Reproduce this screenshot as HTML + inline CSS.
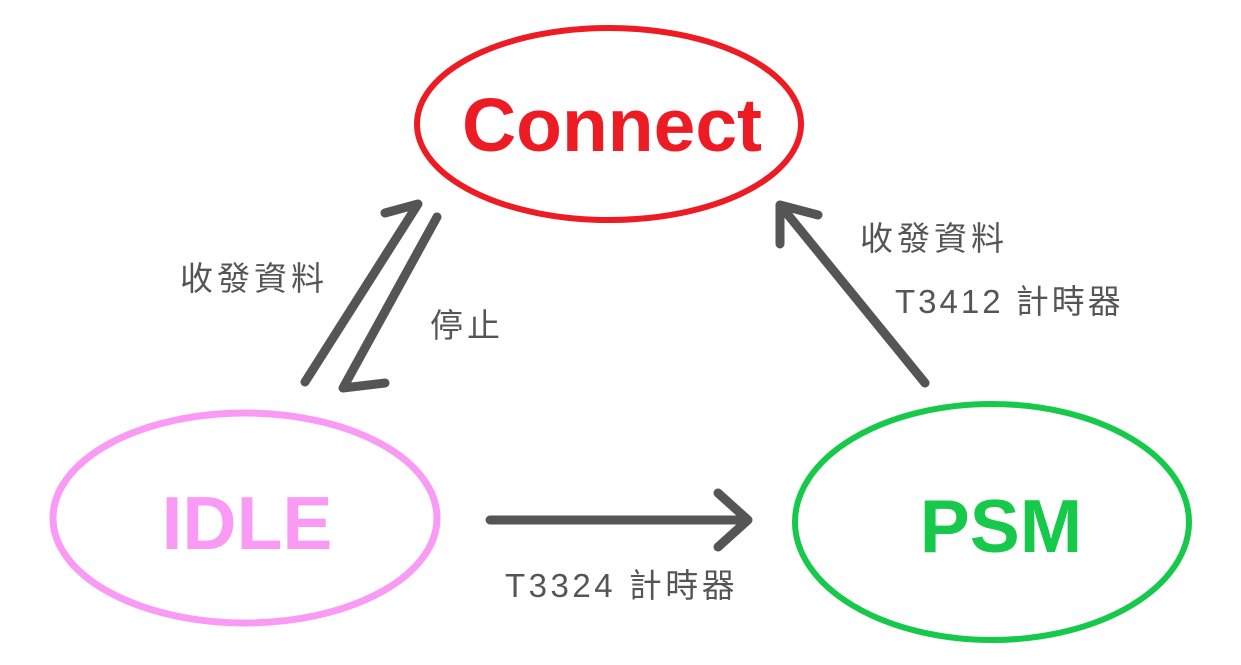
<!DOCTYPE html>
<html><head><meta charset="utf-8"><style>
body{margin:0;background:#fff;width:1241px;height:665px;overflow:hidden}
svg{display:block}
.t{font-family:"Liberation Sans","Noto Sans CJK TC",sans-serif;fill:#555;font-size:33px;letter-spacing:2px}
.b{font-family:"Liberation Sans",sans-serif;font-weight:bold;font-size:75px;text-anchor:middle}
</style></head><body>
<svg width="1241" height="665" viewBox="0 0 1241 665">
<ellipse cx="609" cy="124" rx="192" ry="96" fill="none" stroke="#ed1c24" stroke-width="6"/>
<ellipse cx="245" cy="518" rx="192" ry="105" fill="none" stroke="#f99af5" stroke-width="7"/>
<ellipse cx="992" cy="522" rx="197" ry="118" fill="none" stroke="#17c94a" stroke-width="6"/>
<text class="b" x="612" y="151" fill="#ed1c24">Connect</text>
<text class="b" x="247" y="549" fill="#f99af5">IDLE</text>
<text class="b" x="1001" y="552" fill="#17c94a">PSM</text>
<g fill="none" stroke="#555" stroke-width="9" stroke-linecap="round" stroke-linejoin="round">
<path d="M305 382 L418 204 L385 213"/>
<path d="M437 217 L343 388 L385 383"/>
<path d="M925 383 L780 205 M780 244 L780 205 L818 215"/>
<path d="M490 520 L748 520 M718 493 L748 520 L718 547"/>
</g>
<text class="t" x="180" y="290" style="letter-spacing:4px">收發資料</text>
<text class="t" x="430" y="337" style="letter-spacing:4px">停止</text>
<text class="t" x="860" y="250" style="letter-spacing:4px">收發資料</text>
<text class="t" x="895" y="313" style="letter-spacing:3px">T3412 計時器</text>
<text class="t" x="505" y="597" style="letter-spacing:3.5px">T3324 計時器</text>
</svg>
</body></html>
